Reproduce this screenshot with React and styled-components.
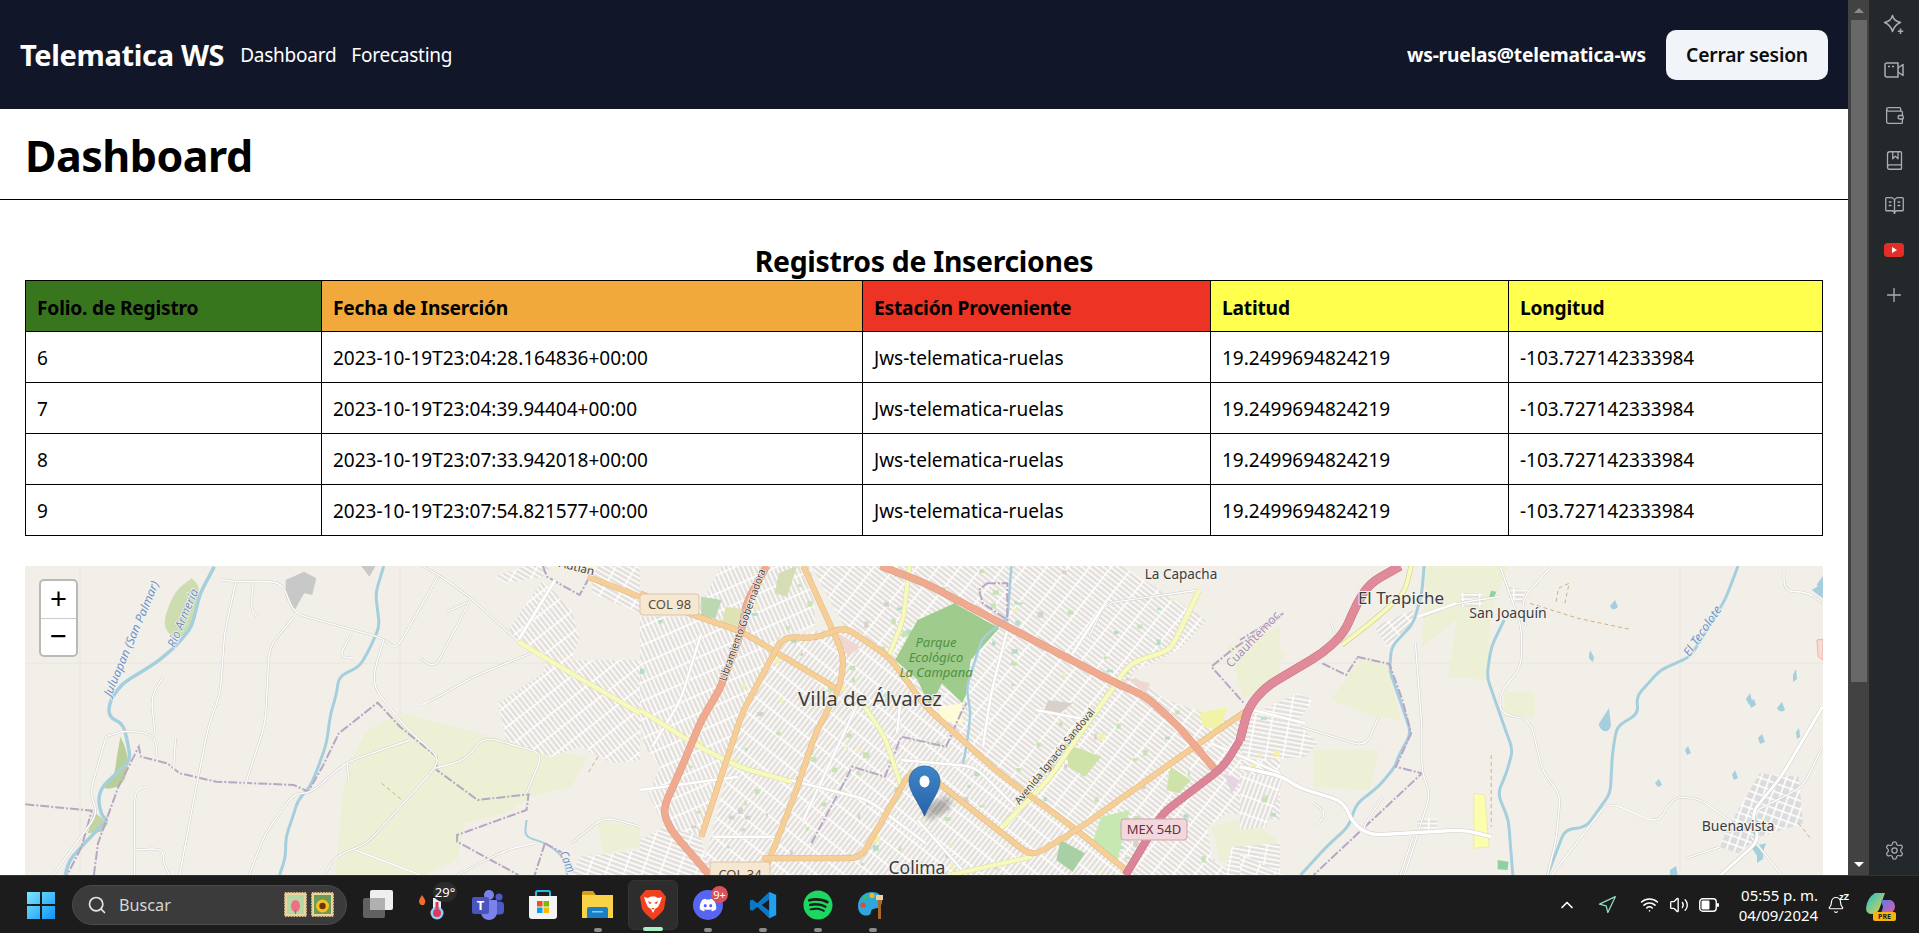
import React from 'react';
import styled, { createGlobalStyle } from 'styled-components';
import {
  Search, ChevronUp, Navigation, Wifi, Volume2, Bell, Plus, Settings, Wallet, BookMarked, BookOpenText,
} from 'lucide-react';
import { FaDiscord, FaSpotify } from 'react-icons/fa';

const UI_FONT = '"Noto Sans", "Open Sans", "Liberation Sans", sans-serif';

const GlobalStyle = createGlobalStyle`
  html, body { margin: 0; padding: 0; background: #fff; overflow: hidden; }
  body { font-family: ${UI_FONT}; color: #000; }
  * { box-sizing: border-box; }
`;

const Screen = styled.div`
  width: 1919px;
  height: 933px;
  display: grid;
  grid-template-rows: 875px 58px;
  overflow: hidden;
`;

const Desktop = styled.div`
  display: flex;
  min-height: 0;
`;

const Page = styled.main`
  flex: 1;
  min-width: 0;
  overflow: hidden;
  background: #fff;
`;

const Nav = styled.nav`
  height: 109px;
  background: #111729;
  color: #fff;
  display: flex;
  align-items: center;
  padding: 0 20px;
`;

const Brand = styled.span`
  font-size: 29px;
  font-weight: 700;
  letter-spacing: -0.35px;
  margin-right: 16px;
`;

const NavLink = styled.a`
  font-size: 19px;
  margin-right: 15px;
  letter-spacing: -0.25px;
`;

const UserName = styled.span`
  margin-left: auto;
  font-size: 19.2px;
  font-weight: 700;
  letter-spacing: -0.2px;
  margin-right: 20px;
`;

const LogoutButton = styled.button`
  width: 162px;
  height: 50px;
  border: 0;
  border-radius: 10px;
  background: #f1f5f9;
  color: #0c0c0c;
  font-family: inherit;
  font-size: 19.3px;
  font-weight: 600;
  letter-spacing: -0.2px;
`;

const PageHeader = styled.header`
  height: 91px;
  border-bottom: 1px solid #000;
  padding: 2px 25px 0;
  display: flex;
  align-items: center;
`;

const PageTitle = styled.h1`
  margin: 0;
  font-size: 43px;
  font-weight: 700;
  letter-spacing: -0.5px;
`;

const Content = styled.section`
  padding: 40px 25px 0;
`;

const TableTitle = styled.h2`
  margin: 0;
  height: 40px;
  line-height: 43px;
  text-align: center;
  font-size: 28.4px;
  font-weight: 700;
  letter-spacing: -0.3px;
`;

const DataTable = styled.table`
  width: 1797px;
  border-collapse: collapse;
  table-layout: fixed;
  margin-bottom: 30px;
  font-size: 19px;

  td, th {
    height: 51px;
    border: 1px solid #000;
    padding: 2px 11px 0;
    text-align: left;
  }
`;

const HeaderCell = styled.th`
  background: ${(p) => p.$bg};
  font-size: 19.2px;
  font-weight: 700;
  letter-spacing: -0.2px;
`;

const MapFrame = styled.div`
  position: relative;
  height: 620px;
  overflow: hidden;
  background: #f2efe9;

  svg { display: block; }
`;

const ZoomControl = styled.div`
  position: absolute;
  left: 14px;
  top: 13px;
  width: 39px;
  height: 78px;
  border: 2px solid #b9b9b9;
  border-radius: 5px;
  background: #fff;
  display: flex;
  flex-direction: column;
`;

const ZoomButton = styled.div`
  flex: 1;
  display: flex;
  align-items: center;
  justify-content: center;
  font-family: "Liberation Sans", sans-serif;
  font-size: 29px;
  color: #000;
  & + & { border-top: 1px solid #ccc; }
`;

const ScrollTrack = styled.div`
  width: 21px;
  background: #424242;
  display: flex;
  flex-direction: column;
  align-items: center;
`;

const ScrollArrow = styled.div`
  height: 20px;
  width: 100%;
  display: flex;
  align-items: center;
  justify-content: center;
  margin-top: ${(p) => (p.$down ? 'auto' : '0')};
  margin-bottom: ${(p) => (p.$down ? '1px' : '0')};

  &::before {
    content: '';
    border-left: 5px solid transparent;
    border-right: 5px solid transparent;
    ${(p) => (p.$down ? 'border-top: 5px solid #fff;' : 'border-bottom: 5px solid #8a8a8a;')}
  }
`;

const ScrollThumb = styled.div`
  width: 16px;
  height: 662px;
  background: #686868;
`;

const SidePanel = styled.aside`
  width: 50px;
  background: #23282b;
  color: #a9aeb2;
  display: flex;
  flex-direction: column;
  align-items: center;
  padding: 13px 0 13px;
`;

const SideIcon = styled.div`
  width: 24px;
  height: 24px;
  margin-bottom: 21px;
  display: flex;
  align-items: center;
  justify-content: center;
  margin-top: ${(p) => (p.$bottom ? 'auto' : '0')};
  &:last-child { margin-bottom: 0; }
`;

const Taskbar = styled.footer`
  background: #1c1c1c;
  border-top: 1px solid #333;
  display: flex;
  align-items: center;
  color: #fff;
  padding-left: 13px;
  padding-right: 24px;
`;

const TaskSlot = styled.div`
  position: relative;
  width: ${(p) => (p.$active ? '50px' : '55px')};
  margin: ${(p) => (p.$active ? '0 2.5px' : '0')};
  height: 50px;
  flex: none;
  display: flex;
  align-items: center;
  justify-content: center;
  border-radius: 6px;
  ${(p) => p.$active && 'background: #2d2d2d; border: 1px solid #353535;'}

  ${(p) => p.$running && `
    &::after {
      content: '';
      position: absolute;
      bottom: -2px;
      left: 50%;
      transform: translateX(-50%);
      width: ${p.$active ? '20px' : '8px'};
      height: 4px;
      border-radius: 2px;
      background: ${p.$active ? '#a9f0c9' : '#8c8c8c'};
    }
  `}
`;

const SearchBox = styled.div`
  width: 275px;
  height: 40px;
  margin: 0 3px 0 4px;
  border-radius: 20px;
  background: #3b3b3b;
  border: 1px solid #4a4a4a;
  display: flex;
  align-items: center;
  padding-left: 14px;
  gap: 12px;
  color: #d5d5d5;
  font-size: 16.2px;
  flex: none;
`;

const Stamps = styled.div`
  margin-left: auto;
  margin-right: 12px;
  display: flex;
  gap: 4px;
`;

const TempBadge = styled.span`
  position: absolute;
  top: 2px;
  left: 28px;
  width: 24px;
  height: 20px;
  border-radius: 10px;
  background: #2b2b2b;
  font-size: 13px;
  line-height: 20px;
  text-align: center;
`;

const CountBadge = styled.span`
  position: absolute;
  top: 6px;
  right: 7px;
  width: 17px;
  height: 17px;
  border-radius: 50%;
  background: #d9525a;
  font-size: 11px;
  line-height: 17px;
  text-align: center;
`;

const Tray = styled.div`
  margin-left: auto;
  display: flex;
  align-items: center;
`;

const TrayIcon = styled.div`
  position: relative;
  width: ${(p) => p.$w || 30}px;
  margin-left: ${(p) => p.$gap || 0}px;
  display: flex;
  align-items: center;
  justify-content: center;
  color: ${(p) => p.$color || '#fff'};
`;

const Clock = styled.div`
  width: 87px;
  margin-left: 10px;
  padding-right: 3px;
  text-align: right;
  font-size: 15px;
  line-height: 20px;
  letter-spacing: -0.05px;
`;

const SnoozeMark = styled.span`
  position: absolute;
  top: -6px;
  right: 2px;
  font-size: 9px;
  font-weight: 700;
`;

const PreBadge = styled.span`
  position: absolute;
  bottom: -4px;
  right: -1px;
  width: 23px;
  height: 9px;
  border-radius: 2px;
  background: #f5b50e;
  color: #222;
  font-size: 7px;
  font-weight: 700;
  line-height: 9px;
  text-align: center;
`;

const columns = [
  { title: 'Folio. de Registro', width: 296, bg: '#38761d' },
  { title: 'Fecha de Inserción', width: 541, bg: '#f2a93b' },
  { title: 'Estación Proveniente', width: 348, bg: '#ed3323' },
  { title: 'Latitud', width: 298, bg: '#ffff4d' },
  { title: 'Longitud', width: 314, bg: '#ffff4d' },
];

const rows = [
  ['6', '2023-10-19T23:04:28.164836+00:00'],
  ['7', '2023-10-19T23:04:39.94404+00:00'],
  ['8', '2023-10-19T23:07:33.942018+00:00'],
  ['9', '2023-10-19T23:07:54.821577+00:00'],
];

// the map features were read off crops of the reference, each zone has its own x scale
const zones = {
  a: { ox: 0, sx: 1 / 2.45 },
  b: { ox: 640, sx: 1 / 2.45 },
  c: { ox: 1240, sx: 1 / 2.309 },
};

const toPoints = (zone, str) => {
  const nums = str.trim().split(/\s+/).map(Number);
  const { ox, sx } = zones[zone];
  const out = [];
  for (let i = 0; i < nums.length; i += 2) {
    out.push([ox + nums[i] * sx, 560 + nums[i + 1] / 3]);
  }
  return out;
};

const straight = (zone, str, close) => {
  const d = toPoints(zone, str).map((p, i) => `${i ? 'L' : 'M'}${p[0].toFixed(1)} ${p[1].toFixed(1)}`).join(' ');
  return close ? `${d} Z` : d;
};

// polyline with its corners rounded by at most r pixels
const smooth = (zone, str, r = 12) => {
  const pts = toPoints(zone, str);
  let d = `M${pts[0][0].toFixed(1)} ${pts[0][1].toFixed(1)}`;
  const towards = (a, b) => {
    const len = Math.hypot(b[0] - a[0], b[1] - a[1]) || 1;
    const t = Math.min(r, len / 2) / len;
    return [a[0] + (b[0] - a[0]) * t, a[1] + (b[1] - a[1]) * t];
  };
  for (let i = 1; i < pts.length - 1; i += 1) {
    const from = towards(pts[i], pts[i - 1]);
    const to = towards(pts[i], pts[i + 1]);
    d += ` L${from[0].toFixed(1)} ${from[1].toFixed(1)} Q${pts[i][0].toFixed(1)} ${pts[i][1].toFixed(1)} ${to[0].toFixed(1)} ${to[1].toFixed(1)}`;
  }
  const last = pts[pts.length - 1];
  return `${d} L${last[0].toFixed(1)} ${last[1].toFixed(1)}`;
};

const farmland = [
  ['a', '985 458 1330 570 1440 590 1400 680 1300 710 1240 760 1140 790 1120 900 1040 945 820 945 840 700 860 600 900 510'],
  ['a', '1460 780 1568 800 1568 860 1480 880'],
  ['c', '430 18 620 18 580 150 570 360 480 350 500 180 420 260'],
  ['c', '170 570 320 570 300 690 170 680'],
  ['c', '610 395 680 395 680 470 610 470'],
  ['c', '280 290 340 310 370 480 310 470 210 420'],
  ['c', '20 250 110 280 60 350 0 400'],
  ['b', '1440 260 1568 200 1568 340 1480 420'],
  ['b', '1400 800 1490 770 1560 840 1500 945 1420 900'],
];

const urbanAreas = [
  ['a', '1240 220 1330 60 1400 150 1420 230 1400 300 1568 300 1568 600 1500 610 1420 560 1350 590 1240 540 1220 430 1330 340 1340 300', 52],
  ['a', '1210 50 1290 18 1350 18 1330 50 1240 70', 30],
  ['a', '1450 18 1568 18 1568 160 1450 100', 30],
  ['a', '1400 945 1420 890 1568 870 1568 945', 20],
  ['b', '0 170 130 170 200 18 420 18 430 200 340 230 250 460 150 830 60 800 20 700 50 620 10 560 0 500', 66],
  ['b', '420 18 900 18 1180 18 1390 180 1320 270 1200 340 1290 420 1430 480 1568 470 1568 780 1440 760 1390 800 1400 890 1450 945 1190 945 1070 810 880 640 700 440 610 290 500 200', 38],
  ['b', '340 230 500 200 610 290 700 440 880 640 1070 810 1190 945 150 945 250 460', -52],
  ['b', '60 800 150 830 170 945 0 945 0 840', 20],
  ['b', '1450 860 1568 850 1568 945 1430 945', 10],
  ['c', '20 470 130 400 170 420 130 490 180 550 150 590 60 600 0 600', 10],
  ['c', '310 200 400 150 400 200 340 260', -40],
  ['c', '0 640 100 650 85 720 60 800 0 810', -70],
  ['c', '0 880 100 945 0 945', 20],
  ['c', '510 100 560 100 560 140 510 140', 0],
  ['c', '620 80 660 90 650 130 620 120', 0],
  ['c', '410 775 455 775 455 810 410 810', 0],
];

const rivers = [
  ['a', '525 20 490 100 470 200 430 260 380 310 300 370 270 420 265 470 300 490 310 530 320 600 250 680 240 720 250 770 265 780 230 820 200 860 170 900 160 945', 3.5],
  ['a', '940 18 920 100 930 200 900 280 880 320 830 350 825 400 810 460 800 550 780 620 760 680 730 720 715 780 700 830 700 890 685 945', 3],
  ['a', '1290 780 1285 830 1340 850 1380 890 1390 945', 2],
  ['b', '910 18 900 180 840 230 800 380 810 460 800 560 790 620', 2.5],
  ['c', '425 18 420 100 400 190 350 260 345 330 380 460 395 520 365 590 358 620 320 680 270 730 250 800 200 860 140 945', 3],
  ['c', '610 180 580 260 570 350 610 500 630 570 615 640 595 700 620 780 630 945', 3],
  ['c', '1150 18 1120 120 1040 290 970 330 915 410 920 460 870 500 860 580 855 700 800 800 750 810 710 945', 3],
];

const lakes = [
  'M1610 606 l5 -6 l3 7 q-4 4 -7 1z', 'M1590 650 l4 7 l-1 5 q-5 -3 -4 -7z', 'M1600 722 l9 -14 l2 18 q-3 8 -9 4 q-5 -5 -2 -8z',
  'M1746 699 l4 -6 l2 8 l-3 4z', 'M1793 675 l3 -6 l1 10 l-4 3z', 'M1749 702 l5 -3 l2 6 l-5 3z',
  'M1777 708 l5 -6 l3 8 q-5 4 -8 -2z', 'M1758 738 l4 -4 l3 8 l-5 2z', 'M1685 750 l3 -4 l3 7 l-4 2z',
  'M1655 783 l4 -4 l3 6 l-4 2z', 'M1732 775 l3 -5 l3 8 l-4 2z', 'M1796 732 l3 -4 l1 9 l-3 2z',
  'M1817 584 l6 -8 v16 l-4 0z', 'M1757 855 l7 -8 l-1 12 l-6 4z', 'M1670 870 l6 -4 l2 10 l-8 0z', 'M1754 815 l6 10 l-4 14 l-6 -12z',
];

const minorRoads = [
  ['a', '540 60 580 65 690 65 720 160 940 235 970 270 1075 45'],
  ['a', '1030 15 1075 45 1150 110 1270 245'],
  ['a', '578 65 550 220 540 400 510 500 470 750 440 945'],
  ['a', '720 170 660 260 650 490 610 640 600 680'],
  ['a', '620 70 615 150 630 170'],
  ['a', '860 225 830 290 865 295'],
  ['a', '1150 125 1095 155'],
  ['a', '1030 295 1065 325 1150 125'],
  ['a', '940 240 915 340 920 390 1000 510 1075 590 1065 625 900 850 820 890 795 945'],
  ['a', '1300 280 1160 350 1060 420 1030 435'],
  ['a', '1005 540 850 605 760 700 720 700 650 820 610 945'],
  ['a', '850 605 855 660'],
  ['a', '260 530 310 510 380 525 385 590'],
  ['a', '260 530 220 700 240 760 130 945'],
  ['a', '400 350 370 410 380 520'],
  ['a', '360 680 330 690 330 945'],
  ['a', '330 870 400 865 400 910 415 945'],
  ['a', '430 535 425 630'],
  ['a', '1065 625 1140 600 1185 530 1330 580 1290 700'],
  ['a', '870 870 1030 945'],
  ['a', '1120 945 1240 870 1310 850'],
  ['a', '1400 850 1480 770 1568 800'],
  ['b', '1370 90 1140 130 1100 230'],
  ['c', '600 18 650 200 650 320 600 400 600 460 670 480 700 640 740 700 730 840 710 945'],
  ['c', '720 18 650 120 660 200'],
  ['c', '420 170 500 130 600 110'],
  ['c', '405 250 420 500 420 640 440 700 380 945'],
  ['c', '320 470 290 560 140 500'],
  ['c', '720 945 850 725 965 790 1000 710 1060 715 1170 820'],
  ['c', '1180 760 1300 680 1345 560'],
  ['c', '1180 830 1250 945'],
  ['c', '1030 895 1110 860'],
  ['c', '1256 18 1256 95 1310 95 1346 130'],
  ['c', '210 190 225 240'],
  ['c', '170 730 200 760 175 800'],
  ['c', '330 710 280 810 300 825'],
  ['c', '400 830 370 945'],
];

const boundaries = [
  ['a', '62 733 225 752 200 860 165 945'],
  ['a', '230 945 240 850 290 680 340 560 345 590 410 610 440 640 530 665 720 675 755 695 790 620 830 520 925 428 980 500 1070 590 1070 630 1170 720 1295 703 1290 750 1120 825 1120 845 1270 945'],
  ['a', '1335 850 1310 945'],
  ['a', '1335 850 1380 880'],
  ['a', '1330 18 1340 50 1420 105 1440 60'],
  ['b', '420 850 490 690 520 620 600 650 640 530 750 560 790 450 800 430'],
  ['b', '850 70 900 70 900 180 840 130 830 90 850 70'],
  ['b', '1568 170 1450 270 1400 320 1480 430'],
  ['b', '300 900 540 895'],
  ['c', '270 290 345 312 375 420 395 520 360 620 420 640 170 945'],
  ['c', '190 310 245 345 270 295'],
  ['c', '100 160 0 240'],
];

const tracks = [
  ['a', '935 670 985 720'],
  ['a', '1465 590 1440 640'],
  ['c', '670 130 780 175 900 208'],
  ['c', '580 585 580 800'],
  ['c', '730 125 735 85 760 70 750 130'],
  ['c', '1290 790 1320 840'],
];

const whiteStreets = [
  ['b', '900 210 860 400 840 560'],
  ['b', '640 600 820 620 920 740'],
  ['b', '680 780 800 945'],
  ['b', '0 690 240 650'],
  ['b', '150 220 100 420 30 560'],
  ['b', '530 440 400 780'],
  ['b', '970 450 1100 480'],
  ['b', '1400 550 1568 640'],
  ['b', '180 830 330 830'],
  ['b', '640 400 630 520'],
  ['b', '240 620 560 720 700 850'],
  ['b', '1140 130 1060 280'],
  ['c', '30 450 150 490'],
  ['c', '410 170 500 130'],
];

const seeded = (seed) => {
  let s = seed;
  return () => {
    s = (s * 16807) % 2147483647;
    return s / 2147483647;
  };
};

const patchColors = ['#c9e4b4', '#c9e4b4', '#f4f0ad', '#d8d2cc', '#b5dfc4'];
const patches = (() => {
  const rnd = seeded(4217);
  return Array.from({ length: 240 }, () => ({
    x: 560 + rnd() * 800,
    y: 566 + rnd() * 310,
    w: 2 + rnd() * 4.5,
    h: 2 + rnd() * 4.5,
    fill: patchColors[Math.floor(rnd() * patchColors.length)],
  }));
})();

const Road = ({ zone, pts, casing, fill, width }) => {
  const d = smooth(zone, pts);
  return (
    <>
      <path d={d} fill="none" stroke={casing} strokeWidth={width + 1} strokeLinejoin="round" />
      <path d={d} fill="none" stroke={fill} strokeWidth={width} strokeLinejoin="round" />
    </>
  );
};

const Shield = ({ x, y, w, h, fill, stroke, color, children }) => (
  <g>
    <rect x={x} y={y} width={w} height={h} rx="3" fill={fill} stroke={stroke} strokeWidth="1" />
    <text x={x + w / 2} y={y + h / 2 + 4.5} textAnchor="middle" fontSize="13" fill={color}>{children}</text>
  </g>
);

const PlaceLabel = ({ x, y, size, children, anchor = 'middle', color = '#3c3c3c' }) => (
  <text
    x={x}
    y={y}
    textAnchor={anchor}
    fontSize={size}
    fill={color}
    stroke="#f5f3ee"
    strokeWidth="2"
    paintOrder="stroke"
  >
    {children}
  </text>
);

const PathLabel = ({ id, d, size, color, italic, fit, children }) => (
  <>
    <path id={id} d={d} fill="none" />
    <text fontSize={size} fill={color} fontStyle={italic ? 'italic' : 'normal'} stroke="#f5f3ee" strokeWidth="1.5" paintOrder="stroke">
      <textPath href={`#${id}`} textLength={fit} lengthAdjust="spacingAndGlyphs">{children}</textPath>
    </text>
  </>
);

function CityMap() {
  return (
    <svg width="1798" height="620" viewBox="25 566 1798 620" fontFamily={UI_FONT}>
      <defs>
        {urbanAreas.map(([, , rot], i) => (
          <pattern key={`u${i}`} id={`urban${i}`} width="17" height="4.4" patternUnits="userSpaceOnUse" patternTransform={`rotate(${rot})`}>
            <rect width="17" height="4.4" fill="#e4e0db" />
            <rect width="17" height="1.5" fill="#fff" />
            <rect width="1.5" height="4.4" fill="#fff" />
          </pattern>
        ))}
        <pattern id="village" width="8" height="8" patternUnits="userSpaceOnUse" patternTransform="rotate(20)">
          <rect width="8" height="8" fill="#dcdcdc" />
          <rect width="8" height="1.6" fill="#fff" />
          <rect width="1.6" height="8" fill="#fff" />
        </pattern>
        <clipPath id="urbanClip">
          {urbanAreas.slice(4, 7).map(([zone, pts], i) => <path key={i} d={straight(zone, pts, true)} />)}
        </clipPath>
        <linearGradient id="pinFill" x1="0" y1="0" x2="0" y2="1">
          <stop offset="0" stopColor="#3d86c9" />
          <stop offset="1" stopColor="#2a62a8" />
        </linearGradient>
        <filter id="tileBlur"><feGaussianBlur stdDeviation="0.45" /></filter>
        <filter id="pinShadow"><feGaussianBlur stdDeviation="3" /></filter>
      </defs>

      <rect x="24" y="566" width="1800" height="620" fill="#f2efe9" />

      <g filter="url(#tileBlur)">
        <g stroke="#e9e6df" strokeWidth="1">
          <path d="M25 663 H1823 M80 566 V875 M400 566 V875 M1680 566 V875" />
        </g>

        {farmland.map(([zone, pts], i) => <path key={i} d={straight(zone, pts, true)} fill="#eef0d5" />)}

        <path d={straight('a', '700 60 745 35 775 55 765 105 745 100 720 155 700 110', true)} fill="#c8c8c8" />
        <path d={straight('a', '885 18 920 18 905 50', true)} fill="#c8c8c8" />
        <path d={smooth('a', '470 55 430 90 400 180 410 220 440 240 480 180 490 80 470 55')} fill="#cdddb0" />
        <path d={smooth('a', '295 530 285 600 280 650 245 690 300 680 315 620 310 570 295 530')} fill="#b8cf97" />
        <path d={straight('a', '230 755 215 820 250 815 265 790', true)} fill="#c2d4a2" />

        {urbanAreas.map(([zone, pts], i) => (
          <path key={i} d={straight(zone, pts, true)} fill={`url(#urban${i})`} />
        ))}
        <path d={straight('c', '1200 640 1290 650 1300 790 1200 830 1150 880 1105 860 1150 750', true)} fill="url(#village)" />

        <g clipPath="url(#urbanClip)">
          {patches.map((p, i) => <rect key={i} x={p.x} y={p.y} width={p.w} height={p.h} fill={p.fill} />)}
        </g>

        <path d={straight('b', '150 110 200 120 185 175 150 170', true)} fill="#bcd8b0" />
        <path d={straight('b', '340 40 385 18 360 110 330 100', true)} fill="#d5ddb5" />
        <path d={straight('b', '210 140 265 150 240 210 200 190', true)} fill="#dfe2b3" />
        <path d={straight('b', '1040 550 1130 590 1090 650 1050 620', true)} fill="#cfe3a8" />
        <path d={straight('b', '1300 620 1350 660 1320 700 1290 690', true)} fill="#cfe3a8" />
        <path d={straight('b', '1030 840 1090 880 1060 935 1020 900', true)} fill="#a9cfa4" />
        <path d={straight('b', '1130 770 1200 750 1170 900 1110 840', true)} fill="#c7e8b0" />
        <path d={straight('b', '1000 420 1060 430 1030 460 990 450', true)} fill="#d9d0c9" />
        <path d={straight('b', '480 215 540 260 510 290', true)} fill="#f0d7d4" />
        <path d={straight('b', '1190 350 1250 370 1240 400', true)} fill="#f0d7d4" />
        <path d={straight('b', '1370 460 1440 440 1420 510 1380 500', true)} fill="#f3f3a8" />
        <path d={straight('b', '1430 640 1470 660 1450 700', true)} fill="#e4d5e4" />
        <path d={straight('b', '770 130 880 205 810 300 800 400 790 430 740 370 710 440 680 360 625 300 680 180', true)} fill="#9fcb8c" />
        <path d={straight('b', '730 440 790 430 790 495 740 480', true)} fill="#fdfbd8" />
        <path d={straight('c', '540 700 565 705 575 860 540 865', true)} fill="#fdfdb0" stroke="#eee9a8" />
        <path d={straight('c', '1332 240 1346 238 1346 300 1335 290', true)} fill="#f3dcd8" stroke="#eeb2aa" />
        <path d={straight('c', '595 900 620 905 618 930 595 928', true)} fill="#8ed1a0" />
        <path d={straight('c', '580 92 592 95 585 115 575 112', true)} fill="#8ed1a0" />

        {rivers.map(([zone, pts, w], i) => (
          <path key={i} d={smooth(zone, pts, 8)} fill="none" stroke="#a6cfde" strokeWidth={w} strokeLinejoin="round" />
        ))}
        <g fill="#a6cfde">
          {lakes.map((d) => <path key={d} d={d} />)}
          <path d={straight('c', '1346 70 1320 90 1346 115', true)} />
          <path d={straight('c', '1215 850 1200 900 1180 860', true)} />
        </g>

        {boundaries.map(([zone, pts], i) => (
          <path key={i} d={straight(zone, pts)} fill="none" stroke="#b8a7c4" strokeWidth="2" strokeDasharray="9 2 2 2" />
        ))}
        {tracks.map(([zone, pts], i) => (
          <path key={i} d={straight(zone, pts)} fill="none" stroke="#d0ae84" strokeWidth="1" strokeDasharray="4 3" />
        ))}

        {minorRoads.map(([zone, pts], i) => (
          <Road key={i} zone={zone} pts={pts} casing="#cfcdc9" fill="#fff" width={1.4} />
        ))}
        {whiteStreets.map(([zone, pts], i) => (
          <Road key={i} zone={zone} pts={pts} casing="#dedbd6" fill="#fff" width={2.5} />
        ))}
        <Road zone="c" pts="0 620 100 650 130 680 240 725 260 790 300 825 520 810 580 830" casing="#cfcdc9" fill="#fff" width={3.5} />
        <Road zone="c" pts="1345 440 1250 650 1180 760 1200 840 1110 945" casing="#cfcdc9" fill="#fff" width={3} />
        <Road zone="a" pts="1360 60 1300 180 1270 240" casing="#dedbd6" fill="#fff" width={3} />

        <Road zone="a" pts="1270 245 1400 340 1568 460" casing="#dcdc9f" fill="#f7fabf" width={4.5} />
        <Road zone="b" pts="0 450 130 550 240 620 370 665" casing="#dcdc9f" fill="#f7fabf" width={4.5} />
        <Road zone="b" pts="660 18 645 180 610 285" casing="#dcdc9f" fill="#f7fabf" width={4} />
        <Road zone="b" pts="550 440 600 530 640 680" casing="#dcdc9f" fill="#f7fabf" width={4} />
        <Road zone="b" pts="1370 90 1300 270 1200 310 1150 400 1090 500 1000 660 880 810" casing="#dcdc9f" fill="#f7fabf" width={4.5} />
        <Road zone="b" pts="760 945 960 890" casing="#dcdc9f" fill="#f7fabf" width={4} />
        <Road zone="c" pts="395 18 380 100 300 190 235 255" casing="#c9c97e" fill="#f7fabf" width={4} />

        <Road zone="a" pts="1440 50 1568 110" casing="#e2b67a" fill="#f6cf98" width={5} />
        <Road zone="b" pts="0 100 130 165 250 215 480 385" casing="#e2b67a" fill="#f6cf98" width={5} />
        <Road zone="b" pts="400 18 470 205 500 290 490 380 430 520 380 700 320 890 300 945" casing="#e2b67a" fill="#f6cf98" width={5} />
        <Road zone="b" pts="150 830 250 460 350 230 430 235 500 200 610 290 700 440 880 640 1070 810 1190 930" casing="#e2b67a" fill="#f6cf98" width={5} />
        <Road zone="b" pts="300 895 540 895 660 640 690 630 960 890 1070 810 1370 550 1500 440" casing="#e2b67a" fill="#f6cf98" width={5} />

        <Road zone="b" pts="310 18 260 130 250 210 195 390 150 480 110 600 55 750 75 810 170 945" casing="#df9a80" fill="#efaa90" width={6.5} />
        <Road zone="b" pts="590 18 700 70 900 200 1150 360 1240 410 1320 500 1410 630" casing="#df9a80" fill="#efaa90" width={6.5} />
        <Road zone="c" pts="370 18 300 70 270 130 240 220 190 280 60 380 20 440 0 540" casing="#c66f82" fill="#e08a9a" width={8} />
        <Road zone="b" pts="1470 540 1430 620 1280 760 1190 945" casing="#c66f82" fill="#dd8598" width={7} />
      </g>

      <PathLabel id="lblLibramiento" d={straight('b', '210 365 310 25')} size="10.5" fit={118} color="#4a4036">Libramiento Gobernadora</PathLabel>
      <PathLabel id="lblAvenida" d={straight('b', '930 735 1118 452')} size="10.5" fit={120} color="#4a4a30">Avenida Ignacio Sandoval</PathLabel>
      <PathLabel id="lblCuauhtemoc" d={straight('b', '1448 325 1580 155')} size="12" fit={72} color="#a48fb4">Cuauhtémoc</PathLabel>
      <PathLabel id="lblJuluapan" d={straight('a', '272 412 395 55')} size="12" fit={124} color="#6f94c8" italic>Juluapan (San Palmar)</PathLabel>
      <PathLabel id="lblArmeria" d={straight('a', '428 265 488 88')} size="12" fit={62} color="#6f94c8" italic>Río Armería</PathLabel>
      <PathLabel id="lblTecolote" d={straight('c', '1038 292 1120 135')} size="12" fit={58} color="#6f94c8" italic>El Tecolote</PathLabel>
      <PathLabel id="lblAutlan" d={straight('a', '1368 20 1460 48')} size="11" fit={36} color="#4a4036">Autlán</PathLabel>
      <PathLabel id="lblCam" d={straight('a', '1370 880 1395 950')} size="12" fit={22} color="#6f94c8" italic>Cam</PathLabel>

      <Shield x={640} y={594} w={59} h={21} fill="#f6e7d2" stroke="#dcc5a5" color="#5c4c38">COL 98</Shield>
      <Shield x={710} y={862} w={60} h={24} fill="#f6e7d2" stroke="#dcc5a5" color="#5c4c38">COL 34</Shield>
      <Shield x={1121} y={819} w={66} h={21} fill="#f2d8dc" stroke="#d0a3ab" color="#6b2d3a">MEX 54D</Shield>

      <PlaceLabel x={870} y={706} size={20.5}>Villa de Álvarez</PlaceLabel>
      <PlaceLabel x={917} y={874} size={17.5}>Colima</PlaceLabel>
      <PlaceLabel x={1181} y={579} size={13.5}>La Capacha</PlaceLabel>
      <PlaceLabel x={1401} y={604} size={17}>El Trapiche</PlaceLabel>
      <PlaceLabel x={1508} y={618} size={14}>San Joaquín</PlaceLabel>
      <PlaceLabel x={1738} y={831} size={14}>Buenavista</PlaceLabel>
      <g fontStyle="italic" fill="#4f9140" fontSize="13" textAnchor="middle">
        <text x={936} y={647}>Parque</text>
        <text x={936} y={662}>Ecológico</text>
        <text x={936} y={677}>La Campana</text>
      </g>

      <ellipse cx={938} cy={808} rx={15} ry={7} fill="#000" opacity=".28" filter="url(#pinShadow)" transform="rotate(-35 938 808)" />
      <path
        d="M924.5 766 C915.5 766 909 773 909 781.5 C909 791 920 805 924.5 816 C929 805 940 791 940 781.5 C940 773 933.5 766 924.5 766 Z"
        fill="url(#pinFill)"
        stroke="#2a5f9e"
        strokeWidth="0.8"
      />
      <ellipse cx={924.5} cy={781.5} rx={5} ry={6} fill="#fff" />
    </svg>
  );
}

const WindowsLogo = () => (
  <svg width="30" height="30" viewBox="0 0 30 30">
    <defs>
      <linearGradient id="winBlue" x1="0" y1="0" x2="1" y2="1">
        <stop offset="0" stopColor="#7ce8ff" />
        <stop offset="1" stopColor="#0f94f5" />
      </linearGradient>
    </defs>
    <path d="M1 2 H14 V14 H1 Z M16 2 H29 V14 H16 Z M1 16 H14 V29 H1 Z M16 16 H29 V29 H16 Z" fill="url(#winBlue)" />
  </svg>
);

const Stamp = ({ bg, children }) => (
  <svg width="23" height="25" viewBox="0 0 23 25">
    <rect x="0.8" y="0.8" width="21.4" height="23.4" fill="#ecd6a4" stroke="#d9bf85" strokeWidth="1.6" strokeDasharray="1.6 1.2" />
    <rect x="3" y="3" width="17" height="19" fill={bg} />
    {children}
  </svg>
);

const TaskView = () => (
  <svg width="30" height="30" viewBox="0 0 30 30">
    <rect x="0" y="8" width="22" height="20" rx="2" fill="#616161" />
    <rect x="7" y="0" width="23" height="20" rx="2" fill="#efefef" />
    <rect x="7" y="8" width="15" height="12" fill="#b0b0b0" />
  </svg>
);

const Thermometer = () => (
  <svg width="36" height="30" viewBox="0 0 36 30">
    <path d="M6 15 C2 12 5 8 7 5 C9 8 12 11 9 15 Z" fill="#ef6c2e" />
    <rect x="18" y="8" width="8" height="14" fill="#e7eef5" />
    <circle cx="22" cy="23" r="6.5" fill="#8fd0f2" />
    <circle cx="22" cy="23" r="4" fill="#e0385c" />
    <rect x="20.5" y="12" width="3" height="9" fill="#e0385c" />
  </svg>
);

const TeamsIcon = () => (
  <svg width="32" height="32" viewBox="0 0 32 32">
    <circle cx="27" cy="8" r="3.5" fill="#5059c9" />
    <rect x="20" y="12.5" width="12" height="13" rx="4" fill="#5059c9" />
    <circle cx="17" cy="6" r="5" fill="#7b83eb" />
    <path d="M9 11 H25 V23 C25 28 21 31 17 31 C13 31 9 28 9 23 Z" fill="#7b83eb" />
    <rect x="0" y="8" width="17" height="17" rx="2" fill="#4b53bc" />
    <text x="8.5" y="21" textAnchor="middle" fill="#fff" fontSize="13" fontWeight="700" fontFamily={UI_FONT}>T</text>
  </svg>
);

const StoreIcon = () => (
  <svg width="30" height="30" viewBox="0 0 30 30">
    <path d="M8 6 V2.5 Q8 1 9.5 1 H20.5 Q22 1 22 2.5 V6" fill="none" stroke="#29b6e8" strokeWidth="2" />
    <path d="M1 6 H29 V26 Q29 29 26 29 H4 Q1 29 1 26 Z" fill="#f4f4f4" />
    <rect x="9" y="11" width="5.5" height="5.5" fill="#f25022" />
    <rect x="15.5" y="11" width="5.5" height="5.5" fill="#7fba00" />
    <rect x="9" y="17.5" width="5.5" height="5.5" fill="#00a4ef" />
    <rect x="15.5" y="17.5" width="5.5" height="5.5" fill="#ffb900" />
  </svg>
);

const FolderIcon = () => (
  <svg width="31" height="28" viewBox="0 0 31 28">
    <path d="M0 2 Q0 0 2 0 H11 L14 4 H0 Z" fill="#d9a016" />
    <path d="M0 4 H31 V27 H0 Z" fill="#f8d347" />
    <path d="M5 18 Q5 16 7 16 H24 Q26 16 26 18 V27 H5 Z" fill="#1b7fc7" />
    <rect x="10" y="20" width="11" height="1.5" fill="#7ecbf5" />
  </svg>
);

const BraveIcon = () => (
  <svg width="26" height="30" viewBox="0 0 26 30">
    <path d="M6 0 H20 L23 3 L26 7 L24 19 Q22 23 13 30 Q4 23 2 19 L0 7 L3 3 Z" fill="#f1411f" />
    <path d="M8 8 L11 6.5 H15 L18 8 L22 7 L20 13 L18 17 L15 19 L13 23 L11 19 L8 17 L6 13 L4 7 Z" fill="#fff" />
    <path d="M8 11 L12 13 L9.5 14 Z M18 11 L14 13 L16.5 14 Z M11.5 18 H14.5 L13 20 Z" fill="#f1411f" />
  </svg>
);

const DiscordIcon = () => (
  <svg width="30" height="30" viewBox="0 0 30 30">
    <circle cx="15" cy="15" r="15" fill="#5865f2" />
    <foreignObject x="6" y="6" width="18" height="18">
      <FaDiscord size={18} color="#fff" />
    </foreignObject>
  </svg>
);

const CodeIcon = () => (
  <svg width="30" height="30" viewBox="0 0 24 24">
    <path d="M17 1.5 L7.5 10.5 L3.5 7.5 L1.5 8.5 V15.5 L3.5 16.5 L7.5 13.5 L17 22.5 L22.5 20 V4 Z M17 7.5 V16.5 L11 12 Z" fill="#0a78c8" fillRule="evenodd" />
    <path d="M17 1.5 L22.5 4 V20 L17 22.5 Z" fill="#22a0f0" />
  </svg>
);

const PaintIcon = () => (
  <svg width="30" height="30" viewBox="0 0 30 30">
    <path d="M14 2 C6 2 0 8 0 16 C0 24 6 27 11 25 C14 24 12 20 15 19 C19 18 24 18 24 11 C24 5 20 2 14 2 Z" fill="#2fa7dd" />
    <circle cx="7" cy="8" r="2.6" fill="#2fbf71" />
    <circle cx="14" cy="5.5" r="2.6" fill="#f5b71a" />
    <circle cx="5" cy="15" r="2.6" fill="#d8502e" />
    <rect x="20" y="9" width="3" height="20" fill="#a9672b" />
    <rect x="18" y="5" width="7" height="5" fill="#e9d3a5" />
  </svg>
);

const BatteryIcon = () => (
  <svg width="20" height="14" viewBox="0 0 20 14">
    <rect x="0.75" y="0.75" width="16.5" height="12.5" rx="3" fill="none" stroke="#fff" strokeWidth="1.4" />
    <rect x="2.5" y="2.5" width="8" height="9" rx="1" fill="#fff" />
    <rect x="18" y="5" width="2" height="4" rx="1" fill="#fff" />
  </svg>
);

const CopilotIcon = () => (
  <svg width="29" height="24" viewBox="0 0 29 24">
    <defs>
      <linearGradient id="coLeft" x1="0" y1="0" x2="1" y2="1">
        <stop offset="0" stopColor="#18c1d6" />
        <stop offset="1" stopColor="#f4d33a" />
      </linearGradient>
      <linearGradient id="coRight" x1="0" y1="0" x2="1" y2="1">
        <stop offset="0" stopColor="#4a7bf0" />
        <stop offset="1" stopColor="#ef5fa7" />
      </linearGradient>
    </defs>
    <path d="M9 0 H19 L14 14 Q12 21 6 21 Q0 21 0 15 Q1 5 9 0 Z" fill="url(#coLeft)" />
    <path d="M15 7 H24 Q29 8 29 14 Q28 21 20 22 H12 Q16 20 17 14 Z" fill="url(#coRight)" />
  </svg>
);

const YoutubeIcon = () => (
  <svg width="20" height="14" viewBox="0 0 20 14">
    <rect width="20" height="14" rx="3.5" fill="#e52d27" />
    <path d="M8 4 L13 7 L8 10 Z" fill="#fff" />
  </svg>
);

const SparkIcon = () => (
  <svg width="22" height="22" viewBox="0 0 22 22" fill="none" stroke="currentColor" strokeWidth="1.5" strokeLinejoin="round">
    <path d="M9.5 1.5 C10.5 5.5 12.5 7.5 17.5 8.5 C13.5 10 11 12.5 9.5 17.5 C8 12.5 5.5 10 1.5 8.5 C6 7.5 8.5 5.5 9.5 1.5 Z" />
    <path d="M17.5 14.5 V20 M14.8 17.2 H20.2" />
  </svg>
);

const VideoCamIcon = () => (
  <svg width="22" height="18" viewBox="0 0 22 18" fill="none" stroke="currentColor" strokeWidth="1.5" strokeLinejoin="round">
    <path d="M2 4 Q2 2 4 2 H15 V16 H4 Q2 16 2 14 Z" />
    <path d="M15 7 L20 3.5 V14.5 L15 11" />
    <path d="M5 5.5 H7 M9 5.5 H11" />
  </svg>
);

const sideIcons = [
  <SparkIcon key="spark" />,
  <VideoCamIcon key="video" />,
  <Wallet key="wallet" size={21} strokeWidth={1.5} />,
  <BookMarked key="saved" size={21} strokeWidth={1.5} />,
  <BookOpenText key="reader" size={21} strokeWidth={1.5} />,
  <YoutubeIcon key="youtube" />,
  <Plus key="add" size={22} strokeWidth={1.5} />,
];

export default function App() {
  return (
    <>
      <GlobalStyle />
      <Screen>
        <Desktop>
          <Page>
            <Nav>
              <Brand>Telematica WS</Brand>
              <NavLink>Dashboard</NavLink>
              <NavLink>Forecasting</NavLink>
              <UserName>ws-ruelas@telematica-ws</UserName>
              <LogoutButton type="button">Cerrar sesion</LogoutButton>
            </Nav>
            <PageHeader>
              <PageTitle>Dashboard</PageTitle>
            </PageHeader>
            <Content>
              <TableTitle>Registros de Inserciones</TableTitle>
              <DataTable>
                <colgroup>
                  {columns.map((c) => <col key={c.title} style={{ width: c.width }} />)}
                </colgroup>
                <thead>
                  <tr>
                    {columns.map((c) => <HeaderCell key={c.title} $bg={c.bg}>{c.title}</HeaderCell>)}
                  </tr>
                </thead>
                <tbody>
                  {rows.map(([id, date]) => (
                    <tr key={id}>
                      <td>{id}</td>
                      <td>{date}</td>
                      <td>Jws-telematica-ruelas</td>
                      <td>19.2499694824219</td>
                      <td>-103.727142333984</td>
                    </tr>
                  ))}
                </tbody>
              </DataTable>
              <MapFrame>
                <CityMap />
                <ZoomControl>
                  <ZoomButton>+</ZoomButton>
                  <ZoomButton>−</ZoomButton>
                </ZoomControl>
              </MapFrame>
            </Content>
          </Page>
          <ScrollTrack>
            <ScrollArrow />
            <ScrollThumb />
            <ScrollArrow $down />
          </ScrollTrack>
          <SidePanel>
            {sideIcons.map((icon) => <SideIcon key={icon.key}>{icon}</SideIcon>)}
            <SideIcon $bottom><Settings size={21} strokeWidth={1.4} /></SideIcon>
          </SidePanel>
        </Desktop>

        <Taskbar>
          <TaskSlot><WindowsLogo /></TaskSlot>
          <SearchBox>
            <Search size={20} color="#e6e6e6" />
            <span>Buscar</span>
            <Stamps>
              <Stamp bg="#b7d8a4">
                <ellipse cx="11.5" cy="14" rx="4.5" ry="6" fill="#ee6f86" />
                <path d="M11.5 18 V22" stroke="#5f8f4a" strokeWidth="1.2" />
              </Stamp>
              <Stamp bg="#6f9a55">
                <circle cx="11.5" cy="14" r="6.5" fill="#f4c020" />
                <circle cx="11.5" cy="14" r="3.2" fill="#6b3413" />
              </Stamp>
            </Stamps>
          </SearchBox>
          <TaskSlot><TaskView /></TaskSlot>
          <TaskSlot>
            <Thermometer />
            <TempBadge>29°</TempBadge>
          </TaskSlot>
          <TaskSlot><TeamsIcon /></TaskSlot>
          <TaskSlot><StoreIcon /></TaskSlot>
          <TaskSlot $running><FolderIcon /></TaskSlot>
          <TaskSlot $running $active><BraveIcon /></TaskSlot>
          <TaskSlot $running>
            <DiscordIcon />
            <CountBadge>9+</CountBadge>
          </TaskSlot>
          <TaskSlot $running><CodeIcon /></TaskSlot>
          <TaskSlot $running><FaSpotify size={30} color="#1ed760" /></TaskSlot>
          <TaskSlot $running><PaintIcon /></TaskSlot>

          <Tray>
            <TrayIcon><ChevronUp size={20} /></TrayIcon>
            <TrayIcon $w={32} $gap={9} $color="#8fe0c0"><Navigation size={20} strokeWidth={1.5} /></TrayIcon>
            <TrayIcon $gap={11}><Wifi size={19} /></TrayIcon>
            <TrayIcon><Volume2 size={20} strokeWidth={1.6} /></TrayIcon>
            <TrayIcon><BatteryIcon /></TrayIcon>
            <Clock>
              <div>05:55 p. m.</div>
              <div>04/09/2024</div>
            </Clock>
            <TrayIcon>
              <Bell size={18} strokeWidth={1.6} />
              <SnoozeMark>zZ</SnoozeMark>
            </TrayIcon>
            <TrayIcon $w={29} $gap={15}>
              <CopilotIcon />
              <PreBadge>PRE</PreBadge>
            </TrayIcon>
          </Tray>
        </Taskbar>
      </Screen>
    </>
  );
}
